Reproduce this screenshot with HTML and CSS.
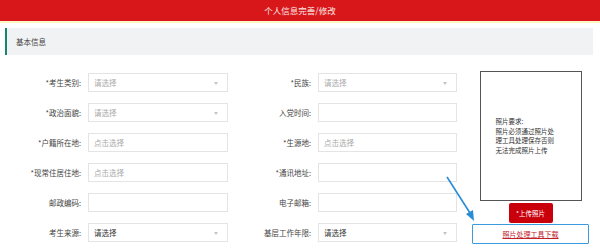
FILE: index.html
```html
<!DOCTYPE html>
<html lang="zh-CN">
  <head>
    <meta charset="UTF-8" />
    <meta name="viewport" content="width=device-width, initial-scale=1.0" />
    <title>个人信息完善/修改</title>
    <link rel="stylesheet" href="styles.css">
  </head>
  <body>
    <div class="top-bar">个人信息完善/修改</div>

    <div class="section-title">基本信息</div>

    <div class="content">
      <!-- 基本信息表单 -->
      <form class="info-form">
        <label>*考生类别:</label>
        <div class="field select"><span class="ph">请选择</span></div>
        <label>*民族:</label>
        <div class="field select"><span class="ph">请选择</span></div>

        <label>*政治面貌:</label>
        <div class="field select"><span class="ph">请选择</span></div>
        <label>入党时间:</label>
        <div class="field"></div>

        <label>*户籍所在地:</label>
        <div class="field"><span class="ph">点击选择</span></div>
        <label>*生源地:</label>
        <div class="field"><span class="ph">点击选择</span></div>

        <label>*现常住居住地:</label>
        <div class="field"><span class="ph">点击选择</span></div>
        <label>*通讯地址:</label>
        <div class="field"></div>

        <label>邮政编码:</label>
        <div class="field"></div>
        <label>电子邮箱:</label>
        <div class="field"></div>

        <label>考生来源:</label>
        <div class="field select"><span class="val">请选择</span></div>
        <label>基层工作年限:</label>
        <div class="field select"><span class="val">请选择</span></div>
      </form>

      <!-- 照片 -->
      <div class="photo-col">
        <div class="photo-box">
          <p>照片要求:<br />照片必须通过照片处<br />理工具处理保存否则<br />无法完成照片上传</p>
        </div>
        <button type="button" class="upload-btn">*上传照片</button>
        <div class="tool-link"><a href="#">照片处理工具下载</a></div>
      </div>
    </div>

    <!-- 标注箭头 -->
    <svg class="hint-arrow" width="600" height="248" viewBox="0 0 600 248">
      <line x1="447" y1="177" x2="470" y2="213" stroke="#2a8bd6" stroke-width="1.6" />
      <polygon points="474,221 466,214 473,210" fill="#2a8bd6" />
    </svg>
  </body>
</html>
```

FILE: styles.css
```css
body {
  font-family: 'Noto Sans CJK SC', 'Liberation Sans', sans-serif;
  margin: 0;
  padding: 0;
  background-color: #fff;
  color: #444;
  font-size: 7.5px;
  width: 600px;
  height: 248px;
  overflow: hidden;
  position: relative;
}

.top-bar {
  height: 21px;
  line-height: 21px;
  background-color: #d8171b;
  color: #fbe9e4;
  text-align: center;
  font-size: 8.5px;
  border-bottom: 2px solid #fcf6c8;
}

.section-title {
  margin: 5px 7px 0 5px;
  height: 27px;
  line-height: 27px;
  padding-left: 9px;
  background-color: #f1f2f3;
  border-left: 2px solid #16876c;
  color: #444;
}

.content {
  display: flex;
  margin-top: 16px;
}

.info-form {
  display: grid;
  grid-template-columns: 88px 140px 90px 139px;
  grid-auto-rows: 19px;
  row-gap: 11px;
  padding-top: 2px;
  margin: 0;
}

.info-form label {
  text-align: right;
  padding-right: 7px;
  line-height: 19px;
  color: #444;
}

.field {
  position: relative;
  border: 1px solid #e4e4e4;
  box-sizing: border-box;
  padding-left: 5px;
  line-height: 17px;
}

.field .ph {
  color: #aaa;
}

.field .val {
  color: #333;
}

.select::after {
  content: '';
  position: absolute;
  right: 9px;
  top: 8px;
  border-top: 3px solid #c4c4c4;
  border-left: 2.5px solid transparent;
  border-right: 2.5px solid transparent;
}

.photo-col {
  display: flex;
  flex-direction: column;
  align-items: center;
  width: 117px;
  margin-left: 15px;
}

.photo-box {
  width: 102px;
  height: 130px;
  box-sizing: border-box;
  border: 1px solid #555;
  display: flex;
  align-items: center;
  padding-left: 15px;
}

.photo-box p {
  margin: 0;
  font-size: 6.5px;
  line-height: 9.5px;
  color: #333;
}

.upload-btn {
  margin-top: 2px;
  width: 44px;
  height: 20px;
  padding: 0;
  border: none;
  border-radius: 2px;
  background-color: #c9000b;
  color: #fff;
  font-family: inherit;
  font-size: 6.5px;
}

.tool-link {
  margin-top: 1px;
  width: 117px;
  height: 20px;
  box-sizing: border-box;
  border: 1.5px solid #3a9ae0;
  border-radius: 1px;
  text-align: center;
  line-height: 17px;
}

.tool-link a {
  color: #c0202a;
  font-size: 7px;
}

.hint-arrow {
  position: absolute;
  left: 0;
  top: 0;
  pointer-events: none;
}
```
